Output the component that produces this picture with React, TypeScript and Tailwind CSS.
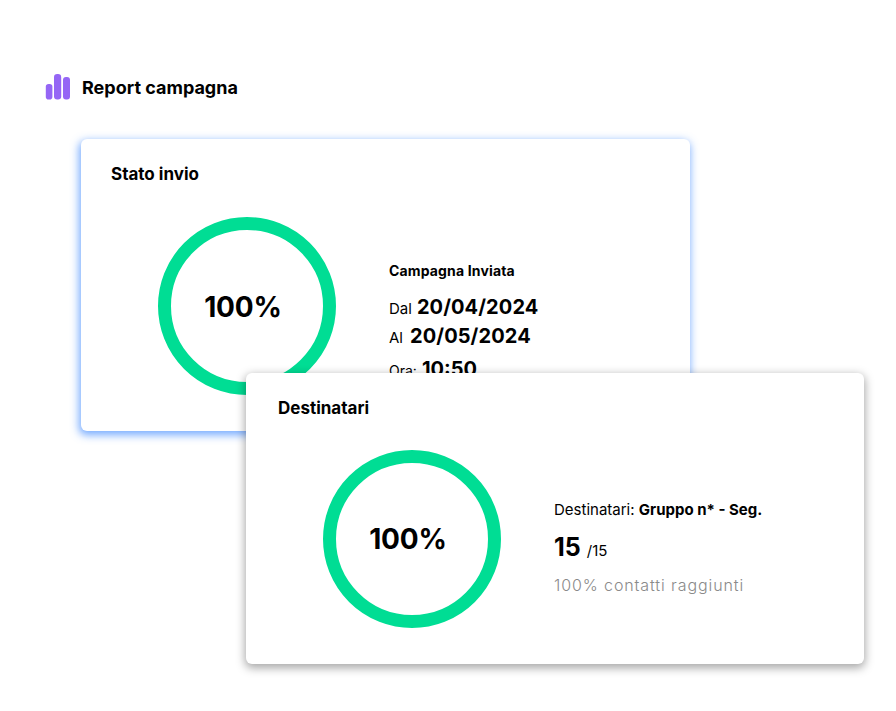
function Ring({ labelClass }: { labelClass: string }) {
  return (
    <div className="w-[178px] h-[178px] rounded-full border-[13px] border-[#00dd94] shrink-0 flex items-center justify-center">
      <span className={"text-[28px] font-bold leading-[34px] tracking-[-0.2px] pr-[8px] " + labelClass}>100%</span>
    </div>
  );
}

export default function App() {
  return (
    <div className="w-[896px] h-[711px] bg-white overflow-hidden pt-[74px] font-['Inter',sans-serif] text-black">
      <div className="flex items-center ml-[45px] h-[26px] gap-[11px]">
        <svg width="26" height="26" viewBox="0 0 26 26" fill="#9566f5" className="shrink-0">
          <rect x="0.8" y="10" width="6.6" height="15.5" rx="2.8" />
          <rect x="9" y="0" width="7.2" height="25.5" rx="3.2" />
          <rect x="18" y="3" width="7" height="22.5" rx="3" />
        </svg>
        <span className="text-[18px] font-bold leading-[28px] pt-[1px]">Report campagna</span>
      </div>

      <div className="relative mt-[39px] ml-[81px] w-[609px] h-[292px] rounded-[6px] bg-white shadow-[-1px_3px_8px_1px_rgba(60,135,255,0.7)] overflow-hidden pl-[30px] pt-[24px]">
        <div className="text-[17px] font-bold leading-[22px]">Stato invio</div>
        <div className="flex mt-[32px] ml-[47px]">
          <Ring labelClass="pt-[2px]" />
          <div className="ml-[53px] pt-[45px]">
            <div className="text-[14px] font-bold leading-[18px] tracking-[0.15px]">Campagna Inviata</div>
            <div className="mt-[13px] flex items-baseline gap-[5px] h-[29px] leading-[29px]">
              <span className="text-[15px]">Dal</span>
              <span className="text-[20px] font-bold tracking-[0.1px]">20/04/2024</span>
            </div>
            <div className="flex items-baseline gap-[7px] h-[29px] leading-[29px]">
              <span className="text-[15px]">Al</span>
              <span className="text-[20px] font-bold tracking-[0.1px]">20/05/2024</span>
            </div>
            <div className="mt-[4px] flex items-baseline gap-[5px] leading-[29px]">
              <span className="text-[14px]">Ora:</span>
              <span className="text-[20px] font-bold">10:50</span>
            </div>
          </div>
        </div>
      </div>

      <div className="relative -mt-[58px] ml-[246px] w-[618px] h-[291px] rounded-[6px] bg-white shadow-[0_3px_10px_1px_rgba(0,0,0,0.35)] pl-[32px] pt-[24px]">
        <div className="text-[17px] font-bold leading-[22px]">Destinatari</div>
        <div className="flex mt-[31px] ml-[45px]">
          <Ring labelClass="pb-[1px]" />
          <div className="ml-[53px] pt-[50px]">
            <div className="text-[15px] leading-[20px]">
              Destinatari: <span className="font-bold">Gruppo n* - Seg.</span>
            </div>
            <div className="mt-[12px] flex items-baseline gap-[6px] leading-[30px]">
              <span className="text-[25px] font-bold">15</span>
              <span className="text-[15px]">/15</span>
            </div>
            <div className="mt-[7px] text-[16px] font-light tracking-[0.9px] text-[#8a8a8a] leading-[24px]">
              100% contatti raggiunti
            </div>
          </div>
        </div>
      </div>
    </div>
  );
}
